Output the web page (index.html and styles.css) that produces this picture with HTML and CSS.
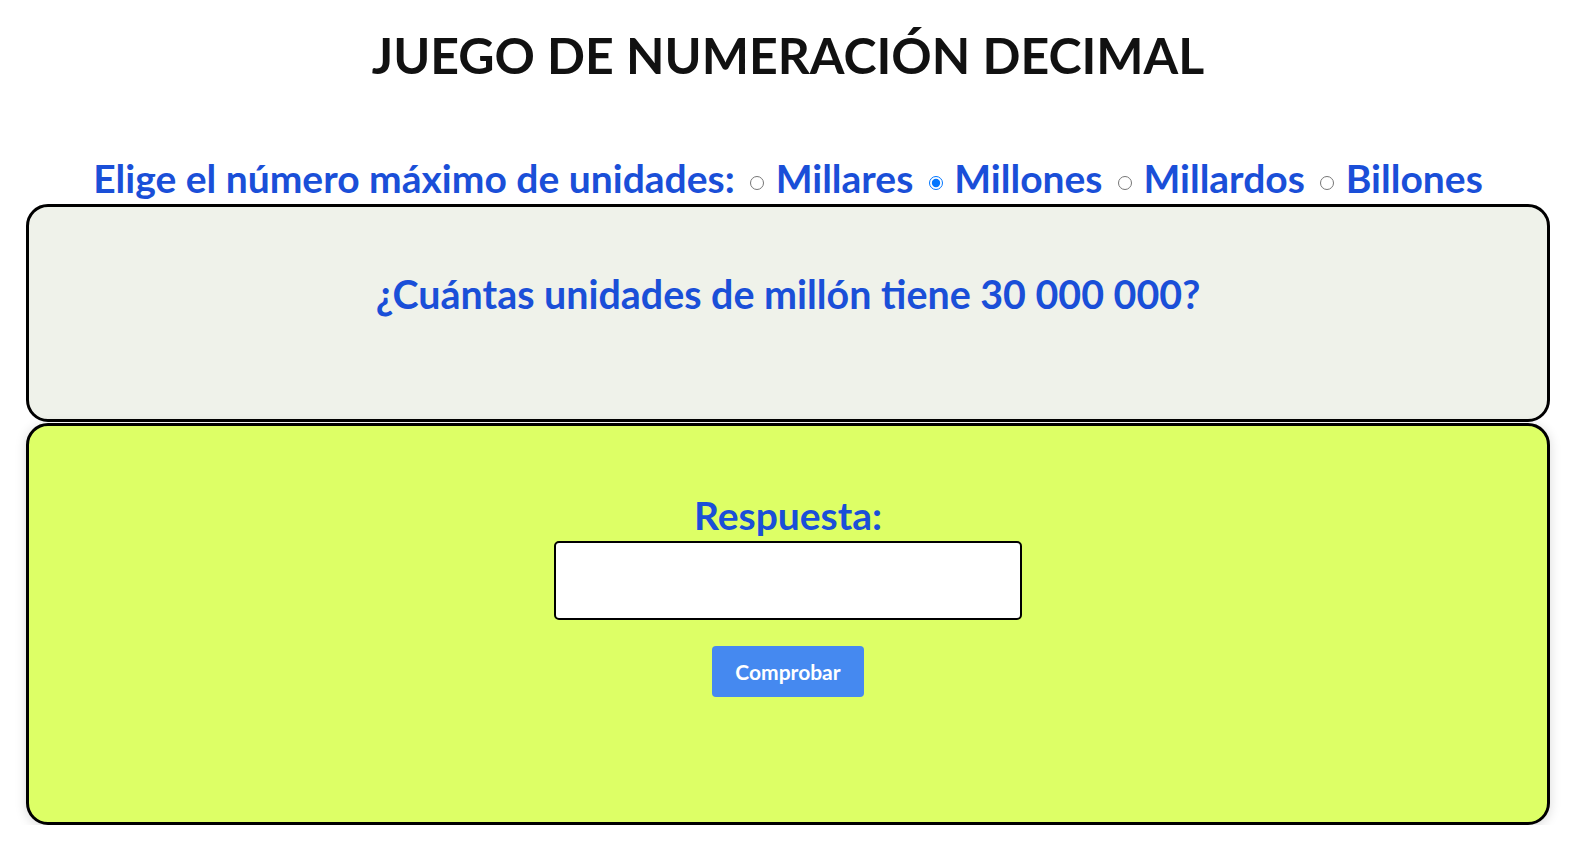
FILE: index.html
```html
<!DOCTYPE html>
<html lang="es">
<head>
<meta charset="utf-8">
<title>Juego de numeración decimal</title>
<link rel="stylesheet" href="styles.css">
</head>
<body>
<h1 class="title">JUEGO DE NUMERACIÓN DECIMAL</h1>
<div class="levels">
  <span class="levels-label">Elige el número máximo de unidades:</span>
  <label class="opt"><input type="radio" name="lvl"> Millares</label>
  <label class="opt"><input type="radio" name="lvl" checked> Millones</label>
  <label class="opt"><input type="radio" name="lvl"> Millardos</label>
  <label class="opt"><input type="radio" name="lvl"> Billones</label>
</div>
<div class="card question-card">
  <p class="question">¿Cuántas unidades de millón tiene 30 000 000?</p>
</div>
<div class="card answer-card">
  <p class="answer-label">Respuesta:</p>
  <input class="answer-input" type="text">
  <button class="check-btn">Comprobar</button>
</div>
</body>
</html>
```
FILE: styles.css
```css
html, body {
  margin: 0;
  padding: 0;
  background: #ffffff;
}
body {
  font-family: "Lato", "Noto Sans", sans-serif;
  padding: 0 24px 0 26px;
}
.title {
  margin: 0;
  padding-top: 27px;
  height: 120px;
  box-sizing: border-box;
  text-align: center;
  font-size: 50px;
  font-weight: 700;
  color: #111111;
  line-height: 56px;
}
.levels {
  text-align: center;
  color: #1a4fd8;
  font-size: 39px;
  font-weight: 700;
  line-height: 48px;
  height: 84px;
  box-sizing: border-box;
  padding-top: 34px;
  white-space: nowrap;
}
.opt input {
  width: 14px;
  height: 14px;
  margin: 0 2px 0 6px;
  vertical-align: middle;
}
.card {
  border: 3px solid #000;
  border-radius: 22px;
  box-sizing: border-box;
}
.question-card {
  background: #eff2ea;
  height: 218px;
  display: flex;
  justify-content: center;
  padding-top: 63px;
}
.question {
  margin: 0;
  font-size: 39.4px;
  font-weight: 700;
  color: #1a4fd8;
  line-height: 48px;
}
.answer-card {
  margin-top: 1px;
  background: #ddff66;
  height: 402px;
  display: flex;
  flex-direction: column;
  align-items: center;
  padding-top: 65px;
  box-shadow: 0 2px 12px rgba(0,0,0,0.15);
}
.answer-label {
  margin: 0;
  font-size: 39px;
  font-weight: 700;
  color: #1a4fd8;
  line-height: 48px;
}
.answer-input {
  margin-top: 2px;
  width: 468px;
  height: 79px;
  box-sizing: border-box;
  border: 2px solid #000;
  border-radius: 5px;
  background: #fff;
}
.check-btn {
  margin-top: 26px;
  width: 152px;
  height: 51px;
  border: none;
  border-radius: 4px;
  background: #4589f0;
  color: #fff;
  font-family: inherit;
  font-size: 21px;
  font-weight: 700;
}
```
